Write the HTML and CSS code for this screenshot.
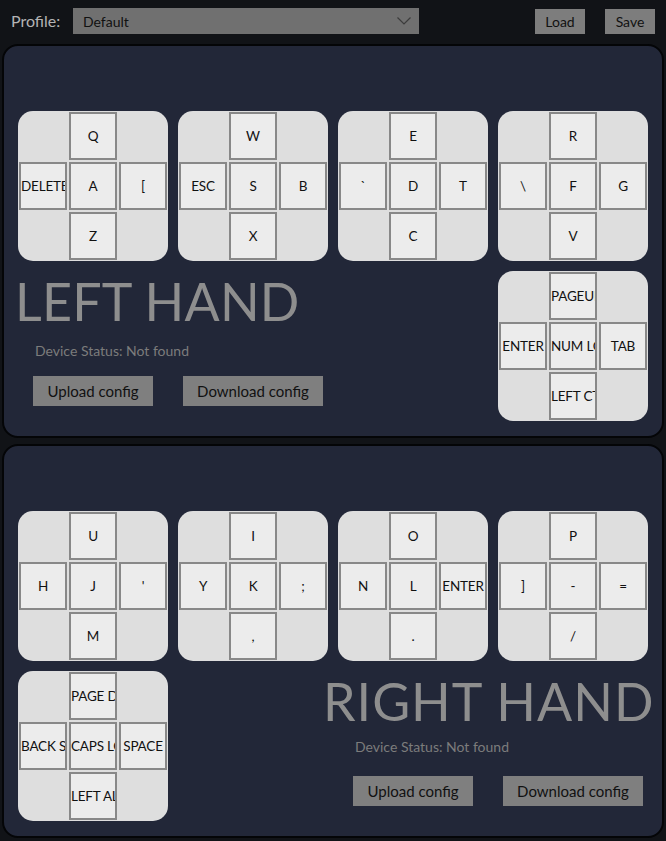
FILE: index.html
```html
<!DOCTYPE html>
<html>
<head>
<meta charset="utf-8">
<link rel="stylesheet" href="styles.css">
</head>
<body>
<div class="topbar">
  <span class="profile-label">Profile:</span>
  <div class="select">
    <span>Default</span>
    <svg class="chevron" width="14" height="8" viewBox="0 0 14 8"><path d="M0.5 0.5 L7 7 L13.5 0.5" fill="none" stroke="#3c3c3c" stroke-width="1.2"/></svg>
  </div>
  <div class="spacer"></div>
  <button class="top-btn">Load</button>
  <button class="top-btn">Save</button>
</div>

<section class="panel">
  <div class="cluster"><div></div><div class="key">Q</div><div></div><div class="key">DELETE</div><div class="key">A</div><div class="key">[</div><div></div><div class="key">Z</div><div></div></div>
  <div class="cluster"><div></div><div class="key">W</div><div></div><div class="key">ESC</div><div class="key">S</div><div class="key">B</div><div></div><div class="key">X</div><div></div></div>
  <div class="cluster"><div></div><div class="key">E</div><div></div><div class="key">`</div><div class="key">D</div><div class="key">T</div><div></div><div class="key">C</div><div></div></div>
  <div class="cluster"><div></div><div class="key">R</div><div></div><div class="key">\</div><div class="key">F</div><div class="key">G</div><div></div><div class="key">V</div><div></div></div>
  <div class="info info-left">
    <div class="hand-title">LEFT HAND</div>
    <div class="status">Device Status: Not found</div>
    <div class="actions"><button class="btn btn-up">Upload config</button><button class="btn btn-down">Download config</button></div>
  </div>
  <div class="cluster"><div></div><div class="key">PAGEUP</div><div></div><div class="key">ENTER</div><div class="key">NUM LOCK</div><div class="key">TAB</div><div></div><div class="key">LEFT CTRL</div><div></div></div>
</section>

<section class="panel">
  <div class="cluster"><div></div><div class="key">U</div><div></div><div class="key">H</div><div class="key">J</div><div class="key">'</div><div></div><div class="key">M</div><div></div></div>
  <div class="cluster"><div></div><div class="key">I</div><div></div><div class="key">Y</div><div class="key">K</div><div class="key">;</div><div></div><div class="key">,</div><div></div></div>
  <div class="cluster"><div></div><div class="key">O</div><div></div><div class="key">N</div><div class="key">L</div><div class="key">ENTER</div><div></div><div class="key">.</div><div></div></div>
  <div class="cluster"><div></div><div class="key">P</div><div></div><div class="key">]</div><div class="key">-</div><div class="key">=</div><div></div><div class="key">/</div><div></div></div>
  <div class="cluster thumb-right"><div></div><div class="key">PAGE DOWN</div><div></div><div class="key">BACK SPACE</div><div class="key">CAPS LOCK</div><div class="key">SPACE</div><div></div><div class="key">LEFT ALT</div><div></div></div>
  <div class="info info-right">
    <div class="hand-title">RIGHT HAND</div>
    <div class="status">Device Status: Not found</div>
    <div class="actions"><button class="btn btn-up">Upload config</button><button class="btn btn-down">Download config</button></div>
  </div>
</section>
</body>
</html>
```

FILE: styles.css
```css
* { box-sizing: border-box; }
html, body { margin: 0; padding: 0; }
body {
  background: #111317;
  font-family: "Lato", "Liberation Sans", sans-serif;
  width: 666px;
  height: 841px;
  overflow: hidden;
}
.topbar {
  height: 44px;
  display: flex;
  align-items: flex-start;
  padding: 8px 11px 0 11px;
}
.profile-label {
  color: #b4b4b4;
  font-size: 16px;
  line-height: 26px;
  width: 62px;
}
.select {
  width: 346px;
  height: 26px;
  background: #707070;
  display: flex;
  align-items: center;
  justify-content: space-between;
  padding: 0 8px 0 10px;
  font-size: 14px;
  color: #111;
}
.chevron { display: block; }
.spacer { flex: 1; }
.top-btn {
  height: 25px;
  margin-top: 1px;
  width: 50px;
  border: none;
  background: #7d7d7d;
  color: #111;
  font-family: inherit;
  font-size: 14px;
  padding: 0;
  margin-left: 20px;
}
.panel {
  margin: 0 2px 6px 2px;
  height: 394px;
  border: 2px solid #040507;
  border-radius: 16px;
  background: #222738;
  display: grid;
  grid-template-columns: repeat(4, 150px);
  grid-template-rows: 150px 150px;
  column-gap: 10px;
  row-gap: 10px;
  padding: 65px 0 0 14px;
}
.cluster {
  width: 150px;
  height: 150px;
  background: #dedede;
  border-radius: 15px;
  display: grid;
  grid-template-columns: repeat(3, 50px);
  grid-template-rows: repeat(3, 50px);
}
.thumb-right { grid-column: 1; grid-row: 2; }
.key {
  margin: 1px;
  width: 48px;
  height: 48px;
  border: 2px solid #888;
  background: #ececec;
  color: #111;
  font-size: 13.5px;
  letter-spacing: -0.2px;
  line-height: 44px;
  text-align: center;
  white-space: nowrap;
  overflow: hidden;
}
.info {
  display: flex;
  flex-direction: column;
  align-items: flex-start;
}
.info-left { grid-column: 1 / span 3; grid-row: 2; }
.info-right { grid-column: 2 / span 3; grid-row: 2; }
.hand-title {
  color: #8e8e8e;
  font-size: 52px;
  line-height: 60px;
  white-space: nowrap;
  margin-left: -3px;
  letter-spacing: 0.2px;
}
.info-right .hand-title { margin-left: 145px; letter-spacing: 1px; }
.status {
  color: #7c7c7c;
  font-size: 14px;
  line-height: 20px;
  margin: 10px 0 0 17px;
}
.info-right .status { margin: 6px 0 0 177px; }
.actions {
  display: flex;
  gap: 30px;
  margin: 15px 0 0 15px;
}
.info-right .actions { margin: 19px 0 0 175px; }
.btn {
  height: 30px;
  border: none;
  background: #7f7f7f;
  color: #111;
  font-family: inherit;
  font-size: 15px;
  padding: 0;
}
.btn-up { width: 120px; }
.btn-down { width: 140px; }
```
